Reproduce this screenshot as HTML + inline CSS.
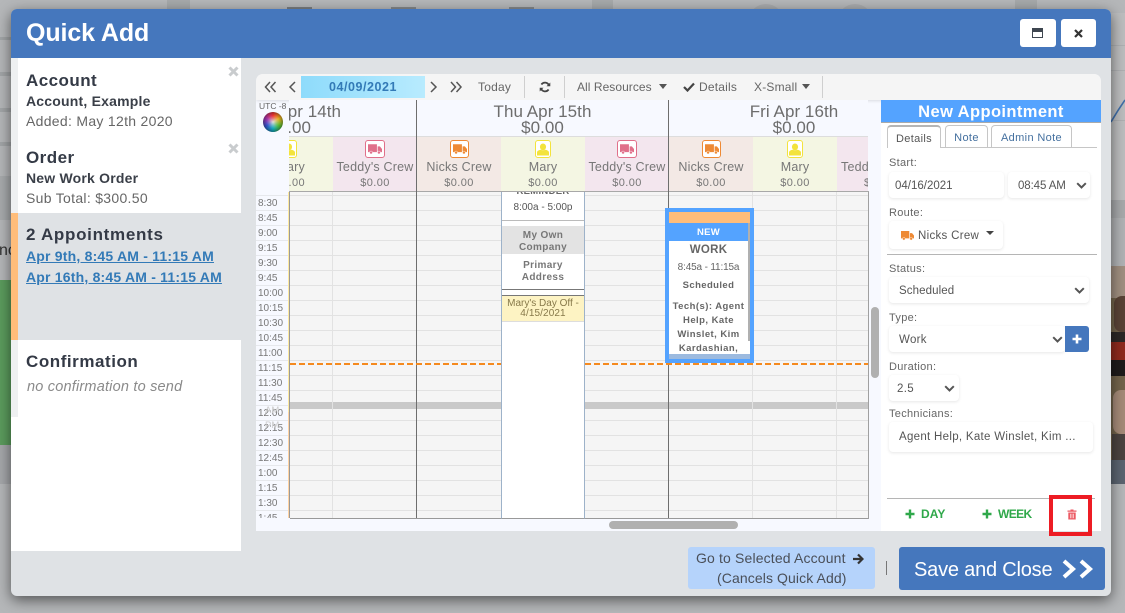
<!DOCTYPE html>
<html><head><meta charset="utf-8"><title>Quick Add</title>
<style>
html,body{margin:0;padding:0}
body{width:1125px;height:613px;overflow:hidden;position:relative;background:#b5b7b9;font-family:"Liberation Sans",sans-serif;color:#555}
.a,.t{position:absolute}
.t{white-space:nowrap;line-height:1}
.c{text-align:center}
.b{font-weight:bold}
.lab{font-size:11px;letter-spacing:.3px;color:#666;left:889px}
.fld{position:absolute;background:#fff;border-radius:4px;box-shadow:0 1px 3px rgba(0,0,0,.1);box-sizing:border-box;font-size:11.5px;letter-spacing:.3px;color:#555;line-height:28px;padding-left:10px;white-space:nowrap}
.chev{position:absolute;width:11px;height:7px}
.res{position:absolute;top:137px;height:54px}
.rn{position:absolute;left:0;right:0;text-align:center;top:24px;font-size:12.5px;letter-spacing:.2px;color:#777;white-space:nowrap;line-height:1}
.rp{position:absolute;left:0;right:0;text-align:center;top:41px;font-size:11px;letter-spacing:.4px;color:#777;white-space:nowrap;line-height:1}
.ib{position:absolute;top:3px;height:16px;background:#fff;border-radius:3px;border:1px solid}
.tm{position:absolute;left:2px;margin-top:1px;font-size:10px;color:#777;line-height:1;white-space:nowrap}
.tab{position:absolute;top:125px;height:22px;box-sizing:border-box;border:1px solid #c6c6c6;border-bottom:0;border-radius:4px 4px 0 0;font-size:11px;letter-spacing:.35px;color:#44709f;text-align:center;line-height:25px;background:#fff}
.tool{position:absolute;top:80px;font-size:12px;letter-spacing:.2px;color:#666;line-height:14px;white-space:nowrap}
.sep{position:absolute;top:76px;width:1px;height:22px;background:#cfcfcf}
.v{position:absolute;top:192px;height:326px;width:1px;background:#e2e2e2}
.dh{font-size:17px;letter-spacing:.05px;color:#6d6d6d}
</style></head>
<body>
<svg width="0" height="0" style="position:absolute">
<symbol id="truck" viewBox="0 0 16 13"><path d="M0 1h10.200v9H0zM11 3.500h2.600L16 6.500V10h-5z" fill="currentColor"/><circle cx="3.500" cy="10.500" r="1.700" fill="currentColor" stroke="#fff" stroke-width=".5"/><circle cx="12.500" cy="10.500" r="1.700" fill="currentColor" stroke="#fff" stroke-width=".5"/></symbol>
<symbol id="person" viewBox="0 0 14 14"><ellipse cx="7" cy="4" rx="3.600" ry="4" fill="currentColor"/><path d="M0 14v-3.500C0 8.600 2.500 7.600 4.500 7.300c1.500 1 3.500 1 5 0 2 .3 4.500 1.300 4.500 3.200V14z" fill="currentColor"/></symbol>
<symbol id="chev" viewBox="0 0 11 7"><path d="M1.200 1.200L5.500 5.500 9.800 1.200" fill="none" stroke="#555" stroke-width="2"/></symbol>
</svg>

<!-- background page -->
<div class="a" style="left:167px;top:0;width:23px;height:9px;background:#a6a9ab"></div>
<div class="a" style="left:592px;top:0;width:21px;height:9px;background:#a6a9ab"></div>
<div class="a" style="left:1015px;top:0;width:22px;height:9px;background:#a6a9ab"></div>
<div class="a" style="left:287px;top:7px;width:25px;height:2px;background:#7b7e81"></div>
<div class="a" style="left:391px;top:7px;width:25px;height:2px;background:#85888b"></div>
<div class="a" style="left:509px;top:7px;width:25px;height:2px;background:#85888b"></div>
<div class="a" style="left:748px;top:4px;width:36px;height:36px;border-radius:50%;background:#a9abad"></div>
<div class="a" style="left:837px;top:4px;width:36px;height:36px;border-radius:50%;background:#a9abad"></div>
<div class="a" style="left:0;top:37px;width:11px;height:3px;background:#a2a5a7"></div>
<div class="a" style="left:0;top:72px;width:11px;height:4px;background:#a2a5a7"></div>
<div class="a" style="left:0;top:108px;width:11px;height:4px;background:#a2a5a7"></div>
<div class="a" style="left:0;top:142px;width:11px;height:4px;background:#a2a5a7"></div>
<div class="a" style="left:0;top:176px;width:11px;height:44px;background:#a8abad"></div>
<div class="t" style="left:-1px;top:243px;font-size:16px;color:#333">nc</div>
<div class="a" style="left:0;top:280px;width:11px;height:165px;background:#5b9c5d"></div>
<div class="a" style="left:0;top:445px;width:11px;height:39px;background:#a5a7aa"></div>
<div class="a" style="left:1111px;top:13px;width:14px;height:187px;background:#bcbdbe"></div>
<div class="a" style="left:1111px;top:45px;width:14px;height:1px;background:#aeb0b2"></div>
<div class="a" style="left:1111px;top:70px;width:14px;height:1px;background:#aeb0b2"></div>
<div class="a" style="left:1111px;top:120px;width:14px;height:1px;background:#aeb0b2"></div>
<div class="a" style="left:1111px;top:200px;width:14px;height:18px;background:#a7a9ab"></div>
<div class="a" style="left:1111px;top:218px;width:14px;height:48px;background:#b0b2b4"></div>
<svg class="a" style="left:1111px;top:95px" width="14" height="30"><path d="M0 27Q7 15 14 5" fill="none" stroke="#3f6ea8" stroke-width="1.600"/></svg>
<div class="a" style="left:1111px;top:266px;width:14px;height:218px;background:#73644c;overflow:hidden">
<div class="a" style="left:0;top:0;width:14px;height:32px;background:#a08f80"></div>
<div class="a" style="left:3px;top:30px;width:11px;height:36px;background:#5a4336;border-radius:8px 0 0 8px"></div>
<div class="a" style="left:0;top:66px;width:14px;height:10px;background:#2c2726"></div>
<div class="a" style="left:0;top:76px;width:14px;height:18px;background:#8f2a1e"></div>
<div class="a" style="left:0;top:94px;width:14px;height:16px;background:#1e1b1b"></div>
<div class="a" style="left:2px;top:124px;width:12px;height:44px;background:#a58a78;border-radius:8px 0 0 8px"></div>
<div class="a" style="left:1px;top:168px;width:13px;height:26px;background:#4b4340"></div>
<div class="a" style="left:0;top:194px;width:14px;height:24px;background:#5b6470"></div>
</div>

<!-- modal -->
<div class="a" style="left:11px;top:9px;width:1100px;height:587px;background:#dfe2e5;border-radius:6px;box-shadow:0 4px 14px rgba(0,0,0,.55);overflow:hidden">
<div class="a" style="left:0;top:0;width:1100px;height:49px;background:#4577bd"></div>
</div>
<div class="t b" style="left:26px;top:21px;font-size:25px;letter-spacing:-.1px;color:#fff">Quick Add</div>
<div class="a" style="left:1020px;top:19px;width:36px;height:28px;background:#fff;border-radius:3px"></div>
<div class="a" style="left:1032px;top:28px;border:1.500px solid #3e4650;border-top-width:4px;width:9px;height:5px"></div>
<div class="a" style="left:1061px;top:19px;width:35px;height:28px;background:#fff;border-radius:3px"></div>
<svg class="a" style="left:1074px;top:29px" width="9" height="9"><path d="M1 1L8 8M8 1L1 8" stroke="#333" stroke-width="2.200"/></svg>

<!-- left panel -->
<div class="a" style="left:11px;top:58px;width:7px;height:155px;background:#eef0f1"></div>
<div class="a" style="left:18px;top:58px;width:223px;height:155px;background:#fff"></div>
<div class="a" style="left:11px;top:213px;width:7px;height:127px;background:#ffbd7a"></div>
<div class="a" style="left:18px;top:213px;width:223px;height:127px;background:#dfe2e5"></div>
<div class="a" style="left:11px;top:340px;width:7px;height:77px;background:#eef0f1"></div>
<div class="a" style="left:18px;top:340px;width:223px;height:77px;background:#fff"></div>
<div class="a" style="left:11px;top:417px;width:230px;height:134px;background:#fff"></div>
<svg class="a" style="left:228px;top:66px" width="11" height="11"><path d="M1.500 1.500L9.500 9.500M9.500 1.500L1.500 9.500" stroke="#c9ccce" stroke-width="3"/></svg>
<svg class="a" style="left:228px;top:143px" width="11" height="11"><path d="M1.500 1.500L9.500 9.500M9.500 1.500L1.500 9.500" stroke="#c9ccce" stroke-width="3"/></svg>
<div class="t b" style="left:26px;top:72px;font-size:17px;letter-spacing:.45px;color:#343a46">Account</div>
<div class="t b" style="left:26px;top:94px;font-size:14px;letter-spacing:.2px;color:#3a3f48">Account, Example</div>
<div class="t" style="left:26px;top:114px;font-size:14px;letter-spacing:.3px;color:#666">Added: May 12th 2020</div>
<div class="t b" style="left:26px;top:149px;font-size:17px;letter-spacing:.45px;color:#343a46">Order</div>
<div class="t b" style="left:26px;top:171px;font-size:14px;letter-spacing:.2px;color:#3a3f48">New Work Order</div>
<div class="t" style="left:26px;top:191px;font-size:14px;letter-spacing:.3px;color:#666">Sub Total: $300.50</div>
<div class="t b" style="left:26px;top:226px;font-size:17px;letter-spacing:.7px;color:#343a46">2 Appointments</div>
<div class="t b" style="left:26px;top:249px;font-size:14px;letter-spacing:.2px;color:#337ab7;text-decoration:underline">Apr 9th, 8:45 AM - 11:15 AM</div>
<div class="t b" style="left:26px;top:270px;font-size:14px;letter-spacing:.2px;color:#337ab7;text-decoration:underline">Apr 16th, 8:45 AM - 11:15 AM</div>
<div class="t b" style="left:26px;top:353px;font-size:17px;letter-spacing:.55px;color:#343a46">Confirmation</div>
<div class="t" style="left:27px;top:380px;font-size:14.500px;font-style:italic;letter-spacing:.2px;color:#8a8a8a">no confirmation to send</div>

<!-- calendar frame -->
<div class="a" style="left:256px;top:74px;width:845px;height:457px;background:#f7f9ff;border-radius:7px 7px 0 0;overflow:hidden">
<div class="a" style="left:0;top:0;width:845px;height:26px;background:#f5f5f5;box-shadow:0 1px 3px rgba(0,0,0,.12)"></div>
</div>
<svg class="a" style="left:264px;top:81px" width="13" height="12"><path d="M6 1L1.500 6 6 11M11.500 1L7 6 11.500 11" fill="none" stroke="#555" stroke-width="1.500"/></svg>
<svg class="a" style="left:288px;top:81px" width="8" height="12"><path d="M7 1L2 6 7 11" fill="none" stroke="#555" stroke-width="1.500"/></svg>
<div class="a b" style="left:301px;top:76px;width:124px;height:22px;background:linear-gradient(90deg,#8edbfb,#b8ebfe);color:#337ab7;font-size:12.500px;letter-spacing:.55px;text-align:center;line-height:22px">04/09/2021</div>
<svg class="a" style="left:430px;top:81px" width="8" height="12"><path d="M1 1L6 6 1 11" fill="none" stroke="#555" stroke-width="1.500"/></svg>
<svg class="a" style="left:450px;top:81px" width="13" height="12"><path d="M1 1L5.500 6 1 11M6.500 1L11 6 6.500 11" fill="none" stroke="#555" stroke-width="1.500"/></svg>
<div class="tool" style="left:478px">Today</div>
<div class="sep" style="left:524px"></div>
<svg class="a" style="left:539px;top:81px" width="12" height="12" viewBox="0 0 12 12"><path d="M10 4.500A4.300 4.300 0 0 0 2.400 3.500M2 7.500A4.300 4.300 0 0 0 9.600 8.500" fill="none" stroke="#444" stroke-width="1.800"/><path d="M11.300 1.500V5.300H7.500zM.7 10.500V6.700H4.500z" fill="#444"/></svg>
<div class="sep" style="left:564px"></div>
<div class="tool" style="left:577px;letter-spacing:.05px">All Resources</div>
<div class="a" style="left:659px;top:84px;border:4px solid transparent;border-top:5px solid #555;border-bottom:0"></div>
<svg class="a" style="left:683px;top:82px" width="12" height="10"><path d="M1 5L4.500 8.500 11 1.500" fill="none" stroke="#444" stroke-width="2.200"/></svg>
<div class="tool" style="left:699px">Details</div>
<div class="tool" style="left:754px">X-Small</div>
<div class="a" style="left:802px;top:84px;border:4px solid transparent;border-top:5px solid #555;border-bottom:0"></div>
<div class="sep" style="left:822px"></div>

<!-- gutter -->
<div class="t" style="left:259px;top:102px;font-size:8.500px;color:#666">UTC -8</div>
<div class="a" style="left:263px;top:112px;width:20px;height:20px;border-radius:50%;background:radial-gradient(circle,#ddd 0,rgba(220,220,220,.4) 25%,rgba(0,0,0,0) 45%,rgba(0,0,0,.75) 100%),conic-gradient(#e33,#e8b020,#5b3,#1ab,#35c,#a3a,#e33)"></div>

<!-- day headers -->
<div class="a" style="left:289px;top:100px;width:579px;height:37px;overflow:hidden;background:#f7f9ff">
<div class="t dh" style="right:527px;top:3px">Wed Apr 14th</div>
<div class="t dh" style="right:557px;top:19px">$0.00</div>
<div class="t c dh" style="left:128px;width:251px;top:3px">Thu Apr 15th</div>
<div class="t c dh" style="left:128px;width:251px;top:19px">$0.00</div>
<div class="t c dh" style="left:380px;width:250px;top:3px">Fri Apr 16th</div>
<div class="t c dh" style="left:380px;width:250px;top:19px">$0.00</div>
</div>

<!-- resources -->
<div class="a" style="left:289px;top:136px;width:579px;height:1px;background:#ddd"></div>
<div class="res" style="left:289px;width:44px;background:#f4f6e3;overflow:hidden">
<div class="t" style="right:28px;top:24px;font-size:12.500px;letter-spacing:.2px;color:#777">Mary</div>
<div class="t" style="right:28px;top:41px;font-size:11px;letter-spacing:.4px;color:#777">$0.00</div>
<div class="ib" style="left:-8px;width:14px;border-color:#f3e33c;color:#f3e33c"><svg width="12" height="13" style="position:absolute;left:1px;top:1.500px"><use href="#person"/></svg></div>
</div>
<div class="res" style="left:333px;width:84px;background:#f3e6ee">
<div class="ib" style="left:32px;width:18px;border-color:#e0708a;color:#e0708a"><svg width="14" height="12" style="position:absolute;left:2px;top:2px"><use href="#truck"/></svg></div>
<div class="rn">Teddy's Crew</div><div class="rp">$0.00</div></div>
<div class="res" style="left:417px;width:84px;background:#f3e9e5">
<div class="ib" style="left:33px;width:17px;border-color:#ee8a35;color:#ee8a35"><svg width="14" height="12" style="position:absolute;left:1.500px;top:2px"><use href="#truck"/></svg></div>
<div class="rn">Nicks Crew</div><div class="rp">$0.00</div></div>
<div class="res" style="left:501px;width:84px;background:#f4f6e3">
<div class="ib" style="left:34px;width:14px;border-color:#f3e33c;color:#f3e33c"><svg width="12" height="13" style="position:absolute;left:1px;top:1.500px"><use href="#person"/></svg></div>
<div class="rn">Mary</div><div class="rp">$0.00</div></div>
<div class="res" style="left:585px;width:84px;background:#f3e6ee">
<div class="ib" style="left:32px;width:18px;border-color:#e0708a;color:#e0708a"><svg width="14" height="12" style="position:absolute;left:2px;top:2px"><use href="#truck"/></svg></div>
<div class="rn">Teddy's Crew</div><div class="rp">$0.00</div></div>
<div class="res" style="left:669px;width:84px;background:#f3e9e5">
<div class="ib" style="left:33px;width:17px;border-color:#ee8a35;color:#ee8a35"><svg width="14" height="12" style="position:absolute;left:1.500px;top:2px"><use href="#truck"/></svg></div>
<div class="rn">Nicks Crew</div><div class="rp">$0.00</div></div>
<div class="res" style="left:753px;width:84px;background:#f4f6e3">
<div class="ib" style="left:34px;width:14px;border-color:#f3e33c;color:#f3e33c"><svg width="12" height="13" style="position:absolute;left:1px;top:1.500px"><use href="#person"/></svg></div>
<div class="rn">Mary</div><div class="rp">$0.00</div></div>
<div class="res" style="left:837px;width:31px;background:#f3e6ee;overflow:hidden">
<div class="t" style="left:4px;top:24px;font-size:12.500px;letter-spacing:.2px;color:#777">Teddy's Crew</div>
<div class="t" style="left:27px;top:41px;font-size:11px;letter-spacing:.4px;color:#777">$0.00</div>
</div>

<!-- time gutter -->
<div class="a" style="left:256px;top:191px;width:33px;height:327px;overflow:hidden;background:repeating-linear-gradient(180deg,#f7f9ff 0,#f7f9ff 4px,#e6e8ec 4px,#e6e8ec 5px,#f7f9ff 5px,#f7f9ff 15px)">
<div class="tm" style="top:-8px">8:15</div>
<div class="tm" style="top:7px">8:30</div>
<div class="tm" style="top:22px">8:45</div>
<div class="tm" style="top:37px">9:00</div>
<div class="tm" style="top:52px">9:15</div>
<div class="tm" style="top:67px">9:30</div>
<div class="tm" style="top:82px">9:45</div>
<div class="tm" style="top:97px">10:00</div>
<div class="tm" style="top:112px">10:15</div>
<div class="tm" style="top:127px">10:30</div>
<div class="tm" style="top:142px">10:45</div>
<div class="tm" style="top:157px">11:00</div>
<div class="tm" style="top:172px">11:15</div>
<div class="tm" style="top:187px">11:30</div>
<div class="tm" style="top:202px">11:45</div>
<div class="tm" style="top:217px">12:00</div>
<div class="tm" style="top:232px">12:15</div>
<div class="tm" style="top:247px">12:30</div>
<div class="tm" style="top:262px">12:45</div>
<div class="tm" style="top:277px">1:00</div>
<div class="tm" style="top:292px">1:15</div>
<div class="tm" style="top:307px">1:30</div>
<div class="tm" style="top:322px">1:45</div>
<div class="tm" style="top:214px;left:9px;font-size:9.500px;color:#ccc">AM</div>
<div class="tm" style="top:229px;left:9px;font-size:9.500px;color:#ccc">PM</div>
</div>
<div class="a" style="left:288px;top:192px;width:2px;height:220px;background:#fde9a0"></div>
<div class="a" style="left:288px;top:412px;width:2px;height:106px;background:#ffd3a3"></div>

<!-- grid -->
<div class="a" style="left:290px;top:192px;width:578px;height:327px;background:#f5f5f5 repeating-linear-gradient(180deg,#f5f5f5 0,#f5f5f5 3px,#e2e2e2 3px,#e2e2e2 4px,#f5f5f5 4px,#f5f5f5 15px);border-bottom:1px solid #999;box-sizing:border-box"></div>
<div class="a" style="left:289px;top:191px;width:580px;height:1px;background:#a8a8a8"></div>
<div class="a" style="left:289px;top:192px;width:1px;height:326px;background:#9a9a9a"></div>
<div class="a" style="left:868px;top:192px;width:1px;height:327px;background:#a0a0a0"></div>
<div class="a" style="left:290px;top:402px;width:578px;height:7px;background:#c9c9c9"></div>
<div class="v" style="left:332px"></div>
<div class="v" style="left:752px"></div>
<div class="v" style="left:836px"></div>

<!-- white mary column -->
<div class="a" style="left:501px;top:192px;width:84px;height:327px;background:#fff;border-left:1px solid #9db2c9;border-right:1px solid #9db2c9;border-bottom:1px solid #999;box-sizing:border-box;overflow:hidden">
<div class="t c b" style="left:0;width:82px;top:-5px;font-size:9.500px;letter-spacing:.3px;color:#666">REMINDER</div>
<div class="t c" style="left:0;width:82px;top:11px;font-size:10px;color:#555">8:00a - 5:00p</div>
<div class="a" style="left:0;top:28px;width:82px;height:1px;background:#bbb"></div>
<div class="a" style="left:0;top:34px;width:82px;height:28px;background:#e3e3e3"></div>
<div class="t c b" style="left:0;width:82px;top:38.500px;font-size:10px;letter-spacing:.35px;color:#777">My Own</div>
<div class="t c b" style="left:0;width:82px;top:50.500px;font-size:10px;letter-spacing:.35px;color:#777">Company</div>
<div class="t c b" style="left:0;width:82px;top:68.500px;font-size:10px;letter-spacing:.35px;color:#777">Primary</div>
<div class="t c b" style="left:0;width:82px;top:80.500px;font-size:10px;letter-spacing:.35px;color:#777">Address</div>
<div class="a" style="left:0;top:97px;width:82px;height:1px;background:#777"></div>
<div class="a" style="left:0;top:103px;width:82px;height:1px;background:#777"></div>
<div class="a" style="left:0;top:104px;width:82px;height:25px;background:#fdf3c3;border-bottom:1px solid #ddd"></div>
<div class="t c" style="left:0;width:82px;top:107px;font-size:10px;color:#87794a">Mary's Day Off -</div>
<div class="t c" style="left:0;width:82px;top:117px;font-size:10px;letter-spacing:.1px;color:#87794a">4/15/2021</div>
</div>

<!-- day dividers -->
<div class="a" style="left:416px;top:100px;width:1px;height:418px;background:#6e6e6e"></div>
<div class="a" style="left:668px;top:100px;width:1px;height:418px;background:#6e6e6e"></div>

<!-- now line -->
<div class="a" style="left:290px;top:363px;width:211px;height:2px;background:repeating-linear-gradient(90deg,#f58a1f 0,#f58a1f 6px,transparent 6px,transparent 9px)"></div>
<div class="a" style="left:585px;top:363px;width:283px;height:2px;background:repeating-linear-gradient(90deg,#f58a1f 0,#f58a1f 6px,transparent 6px,transparent 9px)"></div>

<!-- event -->
<div class="a" style="left:665px;top:208px;width:89px;height:155px;background:#54a3ff"></div>
<div class="a" style="left:669px;top:212px;width:81px;height:147px;background:#fff;overflow:hidden">
<div class="a" style="left:0;top:0;width:81px;height:11px;background:#ffbd7a"></div>
<div class="a" style="left:0;top:11px;width:79px;height:18px;background:#54a3ff"></div>
<div class="a" style="left:79px;top:11px;width:2px;height:118px;background:#b0b0b0"></div>
<div class="a" style="left:0;top:142px;width:81px;height:5px;background:#9cbadf"></div>
<div class="t c b" style="left:0;width:79px;top:16px;font-size:9.500px;letter-spacing:.3px;color:#fff">NEW</div>
<div class="t c b" style="left:0;width:79px;top:33px;font-size:11.500px;letter-spacing:.3px;color:#666">WORK</div>
<div class="t c" style="left:0;width:79px;top:50.500px;font-size:10px;letter-spacing:-.15px;color:#666">8:45a - 11:15a</div>
<div class="t c b" style="left:0;width:79px;top:68.500px;font-size:9.500px;letter-spacing:.4px;color:#666">Scheduled</div>
<div class="t c b" style="left:0;width:79px;top:89.500px;font-size:9.500px;letter-spacing:.45px;color:#666">Tech(s): Agent</div>
<div class="t c b" style="left:0;width:79px;top:103.500px;font-size:9.500px;letter-spacing:.45px;color:#666">Help, Kate</div>
<div class="t c b" style="left:0;width:79px;top:117.500px;font-size:9.500px;letter-spacing:.45px;color:#666">Winslet, Kim</div>
<div class="t c b" style="left:0;width:79px;top:131.500px;font-size:9.500px;letter-spacing:.45px;color:#666">Kardashian,</div>
</div>

<!-- scrollbars -->
<div class="a" style="left:871px;top:307px;width:8px;height:71px;background:#b0b0b0;border-radius:4px"></div>
<div class="a" style="left:609px;top:521px;width:129px;height:8px;background:#b0b0b0;border-radius:4px"></div>

<!-- right panel -->
<div class="a" style="left:881px;top:100px;width:220px;height:431px;background:#fff"></div>
<div class="a b" style="left:881px;top:100px;width:220px;height:22px;background:#54a3ff;color:#fff;font-size:16.500px;letter-spacing:.4px;text-align:center;line-height:24px">New Appointment</div>
<div class="a" style="left:881px;top:122px;width:220px;height:1px;background:#aaa"></div>
<div class="a" style="left:887px;top:147px;width:210px;height:1px;background:#c6c6c6"></div>
<div class="tab" style="left:887px;width:54px;height:23px;color:#555;border-top:2px solid #b5b5b5;line-height:24px">Details</div>
<div class="tab" style="left:945px;width:43px">Note</div>
<div class="tab" style="left:991px;width:81px">Admin Note</div>

<div class="t lab" style="top:158px">Start:</div>
<div class="fld" style="left:889px;top:172px;width:115px;height:26px;padding-left:6px;letter-spacing:0">04/16/2021</div>
<div class="fld" style="left:1008px;top:172px;width:82px;height:26px;letter-spacing:-.1px">08:45 AM<svg class="chev" style="left:68px;top:10px"><use href="#chev"/></svg></div>
<div class="t lab" style="top:208px">Route:</div>
<div class="fld" style="left:889px;top:221px;width:114px;height:28px;line-height:30px;padding-left:29px">Nicks Crew</div>
<svg class="a" style="left:901px;top:230px;color:#ee8a35" width="13" height="11"><use href="#truck"/></svg>
<div class="a" style="left:986px;top:231px;border:4px solid transparent;border-top:4px solid #444;border-bottom:0"></div>
<div class="a" style="left:887px;top:254px;width:210px;height:1px;background:#b5b5b5"></div>
<div class="t lab" style="top:264px">Status:</div>
<div class="fld" style="left:889px;top:277px;width:200px;height:26px;letter-spacing:.1px">Scheduled<svg class="chev" style="left:185px;top:10px"><use href="#chev"/></svg></div>
<div class="t lab" style="top:313px">Type:</div>
<div class="fld" style="left:889px;top:326px;width:176px;height:26px">Work<svg class="chev" style="left:163px;top:10px"><use href="#chev"/></svg></div>
<div class="a" style="left:1065px;top:326px;width:24px;height:26px;background:#4577bd;border-radius:0 3px 3px 0"></div>
<svg class="a" style="left:1072px;top:334px" width="10" height="10"><path d="M5 .5V9.500M.5 5H9.500" stroke="#fff" stroke-width="2.600"/></svg>
<div class="t lab" style="top:362px">Duration:</div>
<div class="fld" style="left:889px;top:375px;width:70px;height:26px;padding-left:8px">2.5<svg class="chev" style="left:55px;top:10px"><use href="#chev"/></svg></div>
<div class="t lab" style="top:409px">Technicians:</div>
<div class="fld" style="left:889px;top:422px;width:204px;height:30px;line-height:31px">Agent Help, Kate Winslet, Kim ...</div>
<div class="a" style="left:887px;top:498px;width:208px;height:1px;background:#b5b5b5"></div>
<svg class="a" style="left:905px;top:509px" width="10" height="10"><path d="M5 .5V9.500M.5 5H9.500" stroke="#2fa84a" stroke-width="2.400"/></svg>
<div class="t b" style="left:921px;top:508px;font-size:12px;letter-spacing:.1px;color:#2fa84a">DAY</div>
<svg class="a" style="left:982px;top:509px" width="10" height="10"><path d="M5 .5V9.500M.5 5H9.500" stroke="#2fa84a" stroke-width="2.400"/></svg>
<div class="t b" style="left:998px;top:508px;font-size:12px;letter-spacing:-.6px;color:#2fa84a">WEEK</div>
<div class="a" style="left:1049px;top:495px;width:43px;height:41px;border:4px solid #ed1c24;box-sizing:border-box"></div>
<svg class="a" style="left:1067px;top:509px" width="10" height="11" viewBox="0 0 10 11"><path d="M3.500 1.500V.5h3v1H9.500v1.300H.5V1.500zM1.300 3.500h7.400V10.500H1.300z" fill="#ec5a64"/><path d="M3.500 4.800V9.300M5 4.800V9.300M6.500 4.800V9.300" stroke="#fff" stroke-width=".6"/></svg>

<!-- footer -->
<div class="a" style="left:688px;top:547px;width:187px;height:42px;background:#b5d3fb;border-radius:3px"></div>
<div class="t" style="left:696px;top:551px;font-size:14px;letter-spacing:.15px;color:#4a4f58">Go to Selected Account</div>
<svg class="a" style="left:852px;top:553px" width="12" height="12"><path d="M1 6H10M6 1.500L10.500 6 6 10.500" fill="none" stroke="#333" stroke-width="2.200"/></svg>
<div class="t" style="left:717px;top:571px;font-size:14px;letter-spacing:.1px;color:#4a4f58">(Cancels Quick Add)</div>
<div class="a" style="left:886px;top:561px;width:1px;height:14px;background:#777"></div>
<div class="a" style="left:899px;top:547px;width:206px;height:43px;background:#4577bd;border-radius:3px"></div>
<div class="t" style="left:914px;top:560px;font-size:20px;letter-spacing:-.2px;color:#fff">Save and Close</div>
<svg class="a" style="left:1062px;top:558px" width="32" height="22"><path d="M2 3L11 11 2 19M19 3L28 11 19 19" fill="none" stroke="#fff" stroke-width="4"/></svg>
</body></html>
